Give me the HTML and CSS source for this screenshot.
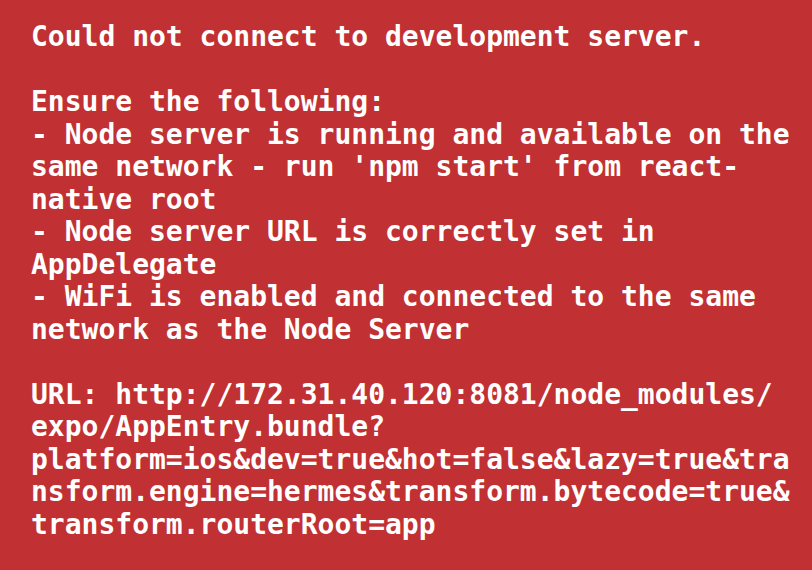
FILE: index.html
```html
<!DOCTYPE html>
<html lang="en">
<head>
<meta charset="utf-8">
<title>Could not connect to development server</title>
<link rel="stylesheet" href="styles.css">
</head>
<body>
<main class="redbox">
  <div class="message">
    <div class="line">Could not connect to development server.</div>
    <div class="line blank"> </div>
    <div class="line">Ensure the following:</div>
    <div class="line">- Node server is running and available on the</div>
    <div class="line">same network - run 'npm start' from react-</div>
    <div class="line">native root</div>
    <div class="line">- Node server URL is correctly set in</div>
    <div class="line">AppDelegate</div>
    <div class="line">- WiFi is enabled and connected to the same</div>
    <div class="line">network as the Node Server</div>
    <div class="line blank"> </div>
    <div class="line">URL: http://172.31.40.120:8081/node_modules/</div>
    <div class="line">expo/AppEntry.bundle?</div>
    <div class="line">platform=ios&amp;dev=true&amp;hot=false&amp;lazy=true&amp;tra</div>
    <div class="line">nsform.engine=hermes&amp;transform.bytecode=true&amp;</div>
    <div class="line">transform.routerRoot=app</div>
  </div>
</main>
</body>
</html>
```
FILE: styles.css
```css
html, body {
  margin: 0;
  padding: 0;
  background: #c13032;
}
.redbox {
  width: 812px;
  height: 570px;
  box-sizing: border-box;
  padding: 21px 0 0 31px;
  background: #c13032;
  overflow: hidden;
}
.message {
  display: flex;
  flex-direction: column;
  color: #ffffff;
  font-family: "DejaVu Sans Mono", "Liberation Mono", monospace;
  font-weight: 700;
  font-size: 28px;
  line-height: 32.5px;
}
.line {
  white-space: pre;
  height: 32.5px;
}
```
